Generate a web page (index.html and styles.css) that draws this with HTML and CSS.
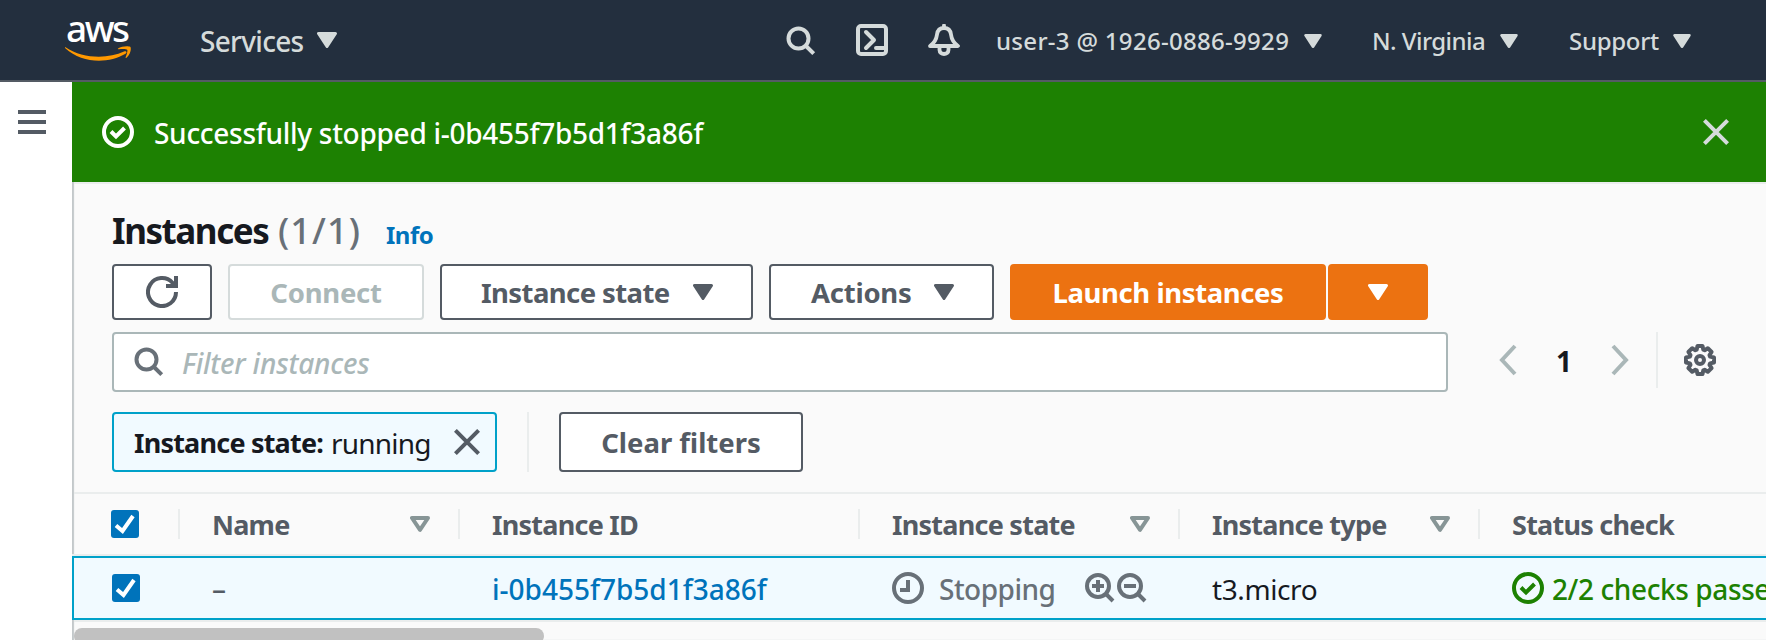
FILE: index.html
```
<!DOCTYPE html>
<html lang="en">
<head>
<meta charset="utf-8">
<title>Instances</title>
<link rel="stylesheet" href="styles.css">
</head>
<body>
<svg class="defs" width="0" height="0">
  <symbol id="caret" viewBox="0 0 20 16"><path d="M1.5 1.5h17L10 14.5z" fill="currentColor" stroke="currentColor" stroke-width="3" stroke-linejoin="round"/></symbol>
  <symbol id="sort" viewBox="0 0 20 16"><path d="M2 2h16L10 13.8z" fill="none" stroke="currentColor" stroke-width="4" stroke-linejoin="round"/></symbol>
  <symbol id="search" viewBox="0 0 30 30"><circle cx="12.5" cy="12.5" r="10" fill="none" stroke="currentColor" stroke-width="4"/><path d="M19.500 19.500l8.200 8.200" stroke="currentColor" stroke-width="4"/></symbol>
  <symbol id="check-circle" viewBox="0 0 32 32"><circle cx="16" cy="16" r="14" fill="none" stroke="currentColor" stroke-width="4"/><path d="M9 15.500l5 5L22.500 12" fill="none" stroke="currentColor" stroke-width="4"/></symbol>
  <symbol id="close" viewBox="0 0 26 26"><path d="M1.400 1.400l23.200 23.200M24.600 1.400L1.400 24.600" stroke="currentColor" stroke-width="4"/></symbol>
</svg>

<header class="nav">
  <a class="logo"><span class="logo-text">aws</span>
    <svg class="logo-smile" viewBox="0 0 66 16"><path d="M.5 1.200C18 13 43 13 59 5.500c2.200-1 3.500 1 1.500 2.200C43 18 17 17.500.3 2.200-.2 1.500 0 .8.5 1.200z" fill="#f90"/><path d="M53 2.500c3.500-2.500 10.500-2.900 12.200-1.700 1.500 1.500.2 7.700-3.700 10.900-.6.4-1.100.2-.9-.4 1.200-2.800 2.300-6.400 1.600-7.500-.8-1-5-.9-8.500-.5-.8.1-1.200-.4-.7-.8z" fill="#f90"/></svg>
  </a>
  <button class="nav-item services"><span>Services</span><svg class="caret"><use href="#caret"/></svg></button>
  <div class="nav-icons">
    <svg class="i30"><use href="#search"/></svg>
    <svg class="i32" viewBox="0 0 32 32" fill="none" stroke="currentColor" stroke-width="4" stroke-linejoin="round"><rect x="2" y="2" width="28" height="28" rx="3"/><path d="M10 8l8 8-8 8M20 24h8" stroke-linecap="round"/></svg>
    <svg class="i32" viewBox="0 0 32 32" fill="none" stroke="currentColor" stroke-width="3.800" stroke-linejoin="round"><path d="M2 22C7 18.500 8.500 15 9 10.500 9.600 5.500 12.500 4 16 4s6.400 1.500 7 6.500c.5 4.500 2 8 7 11.500z"/><path d="M16 4V1.500" stroke-linecap="round"/><path d="M11.500 23v3c0 5.300 9 5.300 9 0v-3"/></svg>
  </div>
  <button class="nav-item small user"><span>user-3 @ 1926-0886-9929</span><svg class="caret"><use href="#caret"/></svg></button>
  <button class="nav-item small region"><span>N. Virginia</span><svg class="caret"><use href="#caret"/></svg></button>
  <button class="nav-item small support"><span>Support</span><svg class="caret"><use href="#caret"/></svg></button>
</header>

<div class="app">
  <aside class="side"><div class="burger"><i></i><i></i><i></i></div></aside>
  <main class="main">
    <div class="flash">
      <svg class="i32"><use href="#check-circle"/></svg>
      <span class="flash-text">Successfully stopped i-0b455f7b5d1f3a86f</span>
      <svg class="i26 flash-close"><use href="#close"/></svg>
    </div>
    <section class="panel">
      <div class="title"><h1>Instances</h1><span class="count">(1/1)</span><a class="info">Info</a></div>
      <div class="actions">
        <button class="btn refresh"><svg class="i32" viewBox="0 0 32 32" fill="none" stroke="currentColor" stroke-width="4"><path d="M30 16A14 14 0 1 1 26.500 6.800L29 10"/><path d="M30 0v10H20"/></svg></button>
        <button class="btn connect"><span>Connect</span></button>
        <button class="btn state"><span>Instance state</span><svg class="caret"><use href="#caret"/></svg></button>
        <button class="btn menu"><span>Actions</span><svg class="caret"><use href="#caret"/></svg></button>
        <div class="split">
          <button class="btn primary launch"><span>Launch instances</span></button>
          <button class="btn primary more"><svg class="caret"><use href="#caret"/></svg></button>
        </div>
      </div>
      <div class="search-row">
        <div class="search"><svg class="i30"><use href="#search"/></svg><span>Filter instances</span></div>
        <div class="pager">
          <svg class="chev" viewBox="0 0 18 32"><path d="M16 2L3 16l13 14" fill="none" stroke="currentColor" stroke-width="4"/></svg>
          <b>1</b>
          <svg class="chev" viewBox="0 0 18 32"><path d="M2 2l13 14L2 30" fill="none" stroke="currentColor" stroke-width="4"/></svg>
        </div>
        <div class="settings">
          <svg class="i32" viewBox="0 0 32 32" fill="none" stroke="currentColor" stroke-width="4" stroke-linejoin="round"><path d="M13.500 2h5l.8 3.700 1.300.5 3.200-2 3.800 3.800-2.100 3.200.6 1.400 3.900.9v5l-3.900.9-.6 1.400 2.100 3.200-3.800 3.800-3.200-2-1.300.5-.8 3.700h-5l-.8-3.700-1.300-.5-3.200 2L4.400 24l2.100-3.200-.6-1.400L2 18.500v-5l3.900-.9.6-1.400L4.400 8l3.800-3.800 3.200 2 1.300-.5z"/><circle cx="16" cy="16" r="4"/></svg>
        </div>
      </div>
      <div class="filters">
        <div class="token"><b>Instance state:</b><span>running</span><svg class="i26"><use href="#close"/></svg></div>
        <div class="clear-wrap"><button class="btn clear"><span>Clear filters</span></button></div>
      </div>
    </section>
    <div class="table">
      <div class="row head">
        <div class="cell pick"><svg class="box" viewBox="0 0 28 28"><rect width="28" height="28" rx="3" fill="#0073bb"/><path d="M5 15.500l6.500 5.500L22 6" fill="none" stroke="#fff" stroke-width="4"/></svg></div>
        <div class="cell"><span>Name</span><svg class="sort"><use href="#sort"/></svg></div>
        <div class="cell"><span>Instance ID</span></div>
        <div class="cell"><span>Instance state</span><svg class="sort"><use href="#sort"/></svg></div>
        <div class="cell"><span>Instance type</span><svg class="sort"><use href="#sort"/></svg></div>
        <div class="cell"><span>Status check</span></div>
      </div>
      <div class="row selected">
        <div class="cell pick"><svg class="box" viewBox="0 0 28 28"><rect width="28" height="28" rx="3" fill="#0073bb"/><path d="M5 15.500l6.500 5.500L22 6" fill="none" stroke="#fff" stroke-width="4"/></svg></div>
        <div class="cell name">–</div>
        <div class="cell"><a class="link">i-0b455f7b5d1f3a86f</a></div>
        <div class="cell stopping">
          <svg class="i32" viewBox="0 0 32 32" fill="none" stroke="currentColor" stroke-width="4"><circle cx="16" cy="16" r="14"/><path d="M16 8v10H8"/></svg>
          <span>Stopping</span>
          <svg class="i30 zoom" viewBox="0 0 30 30" fill="none" stroke="currentColor" stroke-width="4"><circle cx="13" cy="13" r="11"/><path d="M20.500 20.500l7.500 7.500M7 13h12M13 7v12"/></svg>
          <svg class="i30 zoom-out" viewBox="0 0 30 30" fill="none" stroke="currentColor" stroke-width="4"><circle cx="13" cy="13" r="11"/><path d="M20.500 20.500l7.500 7.500M7 13h12"/></svg>
        </div>
        <div class="cell type">t3.micro</div>
        <div class="cell status"><svg class="i32"><use href="#check-circle"/></svg><span>2/2 checks passed</span></div>
      </div>
      <div class="scroll"><div class="thumb"></div></div>
    </div>
  </main>
</div>
</body>
</html>
```
FILE: styles.css
```
* { box-sizing: border-box; }
body {
  margin: 0;
  height: 640px;
  overflow: hidden;
  background: #fafafa;
  color: #16191f;
  font: 28px/36px "Noto Sans", "Open Sans", sans-serif;
  white-space: nowrap;
}
.defs { position: absolute; }
button { font: inherit; color: inherit; background: none; border: 0; padding: 0; letter-spacing: inherit; }
svg { display: block; flex: none; }
.caret { width: 20px; height: 16px; }
.i26 { width: 26px; height: 26px; }
.i30 { width: 30px; height: 30px; }
.i32 { width: 32px; height: 32px; }

/* Top navigation */
.nav {
  display: flex;
  align-items: center;
  height: 82px;
  background: #232f3e;
  border-bottom: 2px solid #545b64;
  color: #d5dbdb;
}
.logo { width: 66px; margin-left: 65px; }
.logo-text { display: block; height: 26px; line-height: 19px; padding-left: 1px; font-size: 37px; letter-spacing: -2.500px; color: #fff; font-weight: 500; }
.logo-smile { width: 66px; height: 16px; margin-top: 2px; }
.nav-item { display: flex; align-items: center; justify-content: space-between; height: 80px; font-weight: 500; }
.nav-item span { padding-top: 1px; }
.services { width: 137px; margin-left: 69px; letter-spacing: -.7px; }
.nav-icons { display: flex; align-items: center; gap: 40px; margin-left: 449px; }
.nav-icons .i30 { margin-top: 1px; }
.small { font-size: 24px; }
.small .caret { width: 18px; height: 14px; margin-top: 2px; }
.user { width: 326px; margin-left: 36px; letter-spacing: .3px; }
.region { width: 146px; margin-left: 50px; letter-spacing: -.55px; }
.support { width: 122px; margin-left: 51px; letter-spacing: -.3px; }

.app { display: flex; height: 558px; }
.side { width: 72px; flex: none; background: #fff; padding: 28px 0 0 18px; }
.burger { display: grid; gap: 6px; width: 28px; }
.burger i { height: 4px; background: #545b64; }
.main { flex: 1; min-width: 0; overflow: hidden; box-shadow: inset 2px 0 1px #c3c8ca; }

/* Success banner */
.flash { display: flex; align-items: center; height: 100px; padding: 0 37px 0 30px; background: #1d8102; color: #fff; }
.flash-text { margin-left: 20px; padding-top: 2px; font-weight: 500; letter-spacing: -.28px; }
.flash-close { margin-left: auto; color: #d5dbdb; }

/* Heading and toolbar */
.panel { height: 312px; margin-left: 2px; padding: 24px 50px 0 38px; border-top: 2px solid #eaeded; border-bottom: 2px solid #eaeded; }
.title { display: flex; align-items: baseline; height: 56px; padding-top: 1px; line-height: 44px; }
h1 { width: 166px; margin: 0; font-size: 35px; line-height: 44px; letter-spacing: -1.450px; }
.count { width: 108px; font-size: 36px; font-weight: 500; letter-spacing: 1.100px; color: #687078; }
.info { font-size: 24px; font-weight: 700; letter-spacing: -.5px; color: #0073bb; }
.actions { display: flex; gap: 16px; }
.btn {
  display: flex;
  align-items: center;
  justify-content: center;
  height: 56px;
  border: 2px solid #545b64;
  border-radius: 4px;
  background: #fff;
  color: #545b64;
  font-size: 27.500px;
  font-weight: 700;
  letter-spacing: -.25px;
}
.btn span, .search span, .token b, .token span, .pager b, .selected { padding-top: 2px; }
.refresh { width: 100px; }
.connect { width: 196px; border-color: #d5dbdb; color: #aab7b8; }
.state { width: 313px; justify-content: space-between; padding: 0 38px 0 39px; letter-spacing: -.6px; }
.menu { width: 225px; justify-content: space-between; padding: 0 38px 0 40px; }
.split { display: flex; gap: 2px; }
.primary { background: #ec7211; border-color: #ec7211; color: #fff; }
.launch { width: 316px; letter-spacing: -.4px; }
.more { width: 100px; }
.search-row { display: flex; margin-top: 12px; }
.search { display: flex; align-items: center; width: 1336px; height: 60px; padding-left: 20px; border: 2px solid #aab7b8; border-radius: 4px; background: #fff; color: #687078; }
.search span { margin-left: 18px; font-style: italic; font-weight: 500; letter-spacing: -.2px; color: #aab7b8; }
.pager { display: flex; align-items: center; justify-content: space-between; width: 130px; height: 56px; margin-left: 51px; color: #aab7b8; }
.pager b { color: #16191f; }
.chev { width: 18px; height: 32px; }
.settings { display: flex; align-items: center; height: 56px; margin-left: 27px; padding-left: 26px; border-left: 2px solid #eaeded; color: #545b64; }
.filters { display: flex; margin-top: 20px; }
.token { display: flex; align-items: center; width: 385px; height: 60px; padding: 0 15px 0 20px; border: 2px solid #00a1c9; border-radius: 4px; background: #f1faff; }
.token b { width: 197px; font-size: 27px; letter-spacing: -.8px; }
.token span { letter-spacing: -.8px; }
.token svg { margin-left: auto; color: #545b64; }
.clear-wrap { margin-left: 30px; padding-left: 30px; border-left: 2px solid #eaeded; }
.clear { width: 244px; height: 60px; letter-spacing: 0; }

/* Instance table */
.row { display: grid; grid-template-columns: 108px 280px 400px 320px 300px 286px; }
.cell { display: flex; align-items: center; padding-left: 32px; min-width: 0; }
.head { height: 62px; padding: 15px 0; border-bottom: 2px solid #eaeded; color: #545b64; font-size: 27px; font-weight: 700; letter-spacing: -.75px; }
.head .cell { height: 30px; border-right: 2px solid #eaeded; }
.head .cell span { padding-top: 1px; }
.head .cell:last-child { border-right: 0; }
.cell.pick { padding-left: 39px; }
.box { width: 28px; height: 28px; }
.sort { width: 20px; height: 16px; margin: 0 28px 0 auto; color: #879596; }
.selected { height: 64px; padding-top: 0; grid-template-columns: 106px 280px 400px 320px 300px 286px; border: 2px solid #00a1c9; border-right: 0; background: #f1faff; }
.selected .cell.pick { padding-left: 38px; }
.selected .name, .selected .type, .link, .selected span { padding-top: 2px; }
.name { color: #545b64; font-weight: 500; }
.link { color: #0073bb; font-weight: 500; }
.stopping { color: #687078; font-weight: 500; letter-spacing: -.5px; }
.stopping span { width: 146px; margin-left: 15px; }
.zoom-out { margin-left: 2px; }
.type { letter-spacing: -.4px; }
.status { color: #1d8102; font-weight: 500; letter-spacing: -.4px; }
.status span { margin-left: 8px; }
.scroll { margin-left: 2px; padding-top: 6px; border-top: 2px solid #eaeded; }
.thumb { width: 470px; height: 16px; border-radius: 8px; background: #c1c1c1; }
```
